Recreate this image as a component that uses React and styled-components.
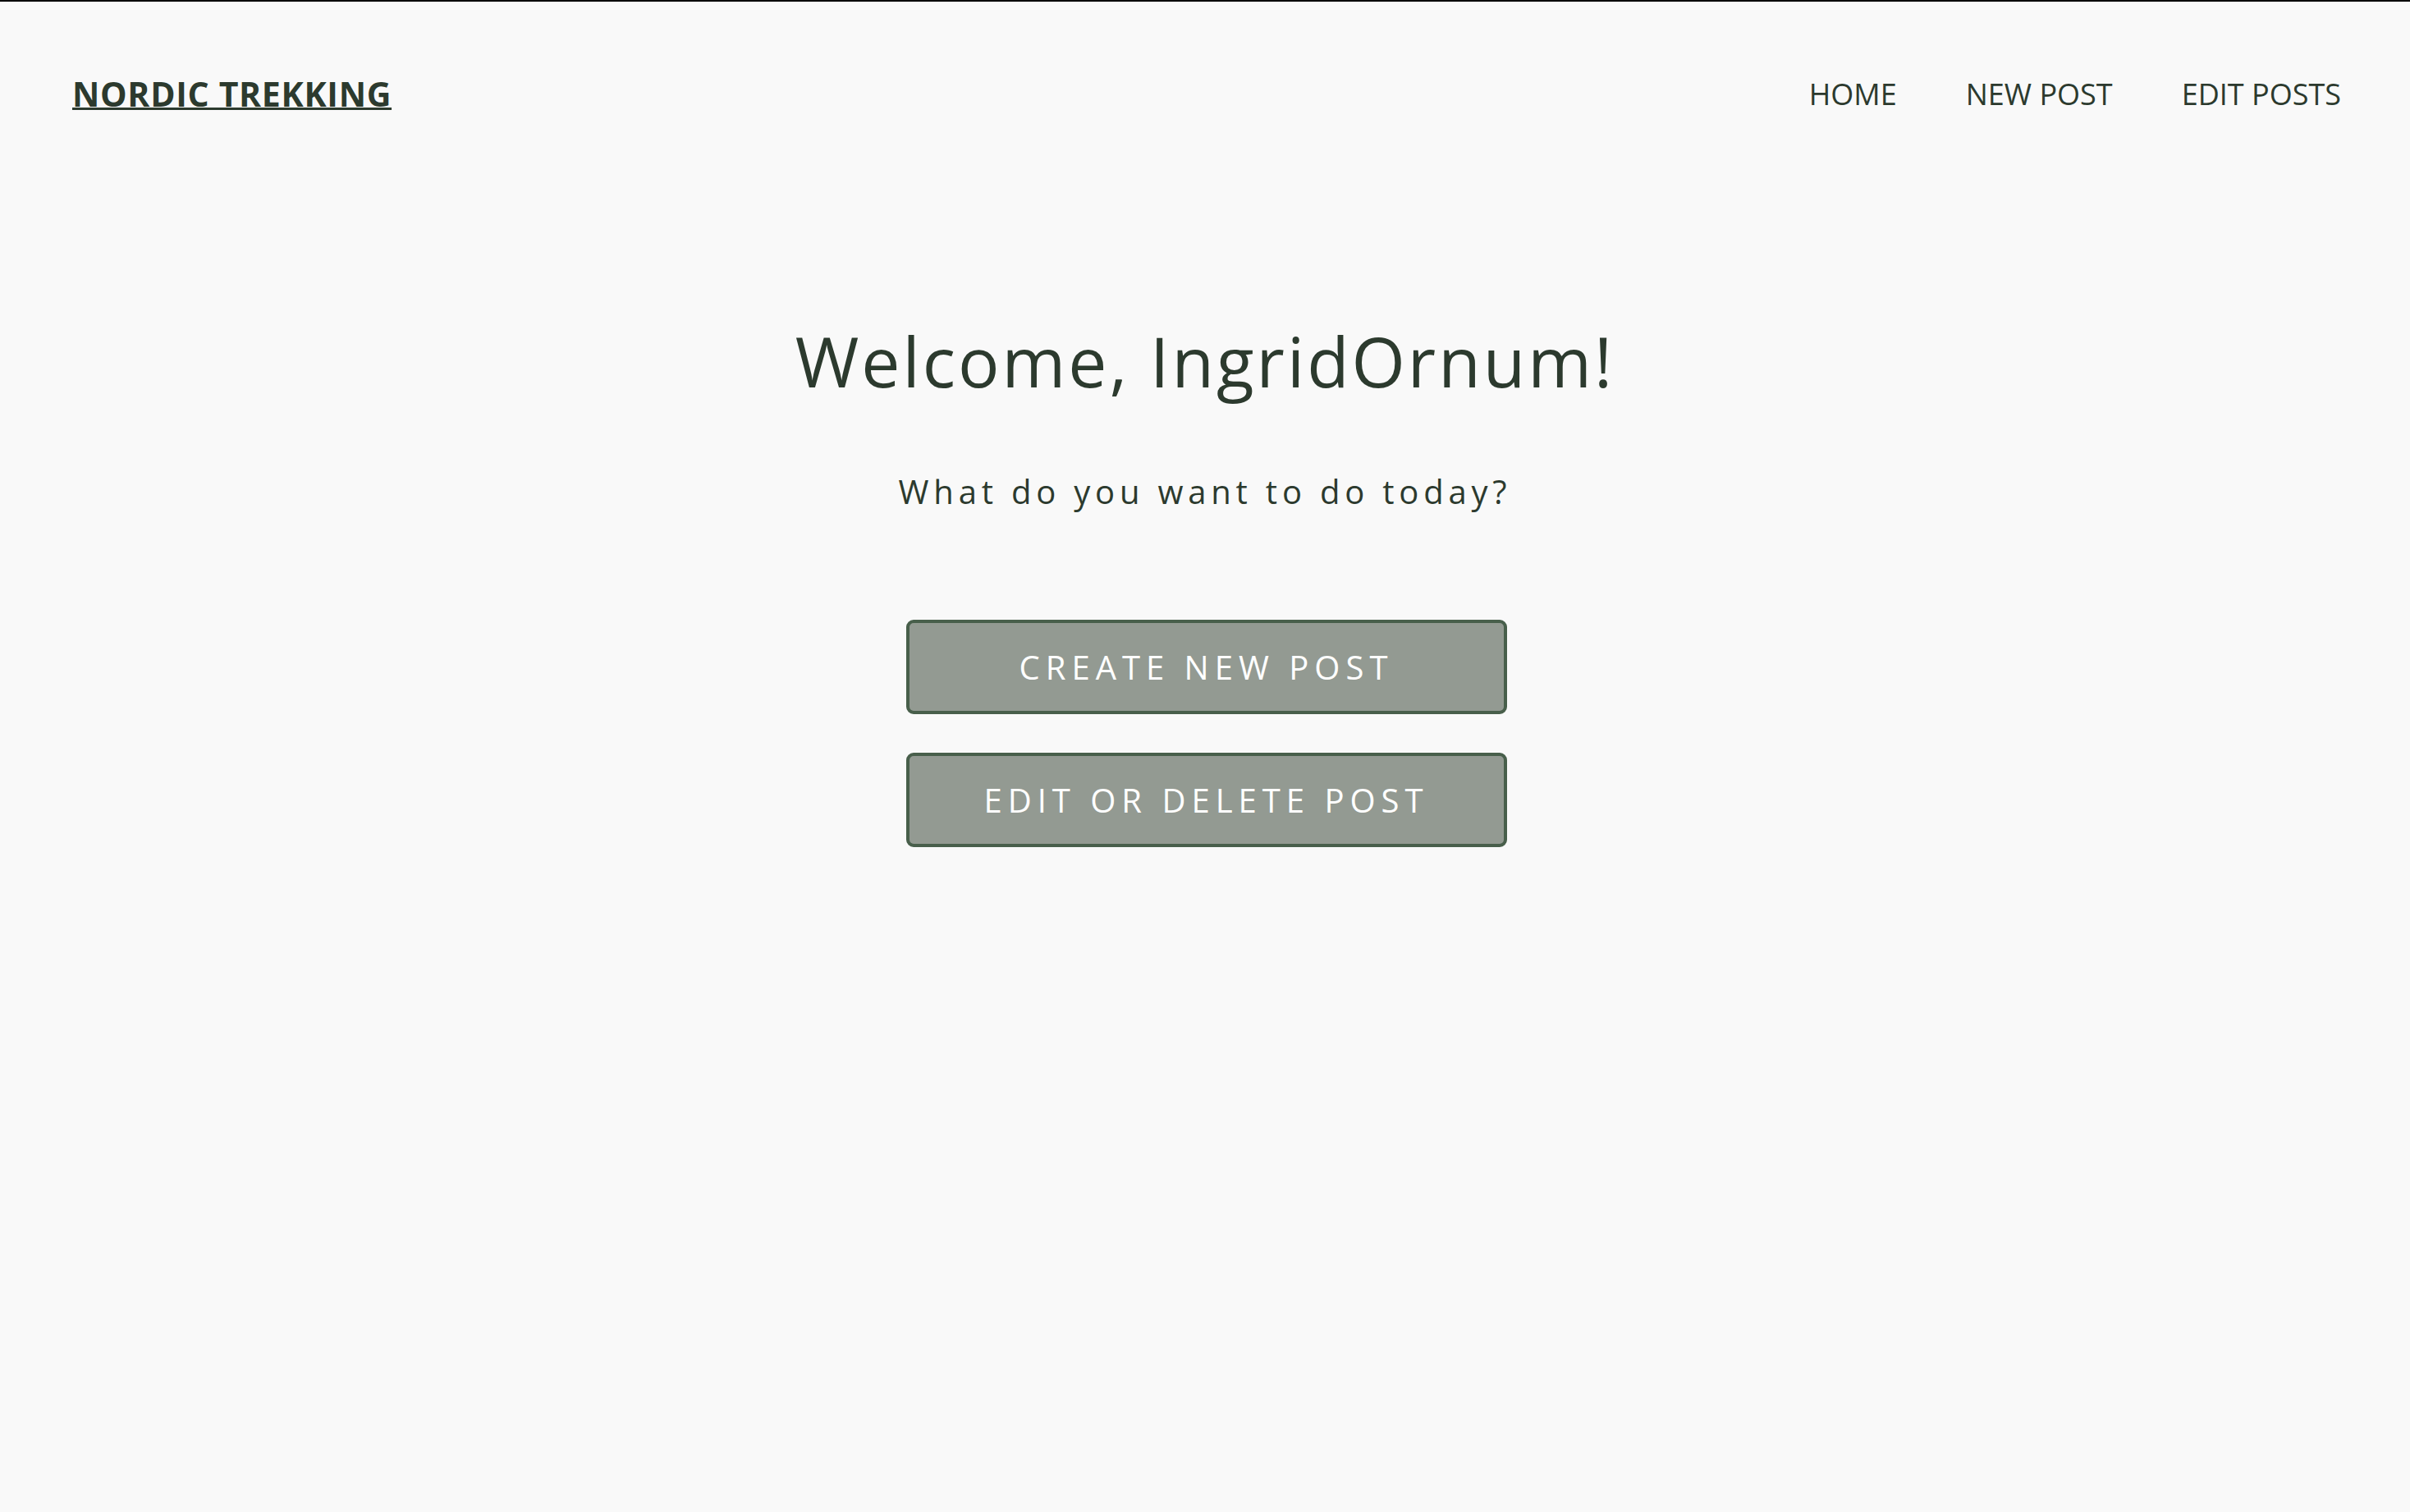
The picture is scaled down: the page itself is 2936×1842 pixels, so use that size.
import styled, { createGlobalStyle } from "styled-components"

const GlobalStyle = createGlobalStyle`
    html, body {
        margin: 0;
        padding: 0;
        background: #f9f9f9;
    }
    body {
        border-top: 2px solid #000;
        min-height: 1840px;
        font-family: "Open Sans", "Liberation Sans", sans-serif;
        color: #2c3a2e;
    }
`

const links = ["HOME", "NEW POST", "EDIT POSTS"]

function App() {
    return (
        <>
            <GlobalStyle />
            <Page>
                <Header>
                    <Logo href="#">NORDIC TREKKING</Logo>
                    <Nav>
                        {links.map((l) => (
                            <NavLink key={l} href="#">{l}</NavLink>
                        ))}
                    </Nav>
                </Header>
                <Main>
                    <Title>Welcome, IngridOrnum!</Title>
                    <Subtitle>What do you want to do today?</Subtitle>
                    <Actions>
                        <ActionButton>CREATE NEW POST</ActionButton>
                        <ActionButton>EDIT OR DELETE POST</ActionButton>
                    </Actions>
                </Main>
            </Page>
        </>
    )
}

const Page = styled.div`
    display: flex;
    flex-direction: column;
`

const Header = styled.header`
    display: flex;
    justify-content: space-between;
    align-items: center;
    padding: 82px 84px 0 88px;
    height: 60px;
`

const Logo = styled.a`
    font-family: "Open Sans", sans-serif;
    font-weight: 700;
    font-size: 41px;
    letter-spacing: 0.7px;
    color: #2c3a2e;
    text-decoration: underline;
    text-decoration-thickness: 3px;
    text-underline-offset: 1px;
`

const Nav = styled.nav`
    display: flex;
    gap: 84px;
`

const NavLink = styled.a`
    font-family: "Open Sans", sans-serif;
    font-size: 36px;
    color: #2c3a2e;
    text-decoration: none;
`

const Main = styled.main`
    display: flex;
    flex-direction: column;
    align-items: center;
    padding-top: 246px;
`

const Title = styled.h1`
    margin: 0;
    font-family: "Open Sans", sans-serif;
    font-weight: 400;
    font-size: 84px;
    letter-spacing: 3px;
    color: #2c3a2e;
    line-height: 1.2;
`

const Subtitle = styled.p`
    margin: 80px 0 0;
    font-family: "Open Sans", sans-serif;
    font-size: 40px;
    letter-spacing: 5.8px;
    color: #2c3a2e;
`

const Actions = styled.div`
    display: flex;
    flex-direction: column;
    gap: 47px;
    margin-top: 129px;
`

const ActionButton = styled.button`
    width: 732px;
    height: 115px;
    margin-left: 3px;
    background: #939a92;
    border: 4px solid #485f4b;
    border-radius: 9px;
    color: #fff;
    font-family: "Open Sans", sans-serif;
    font-size: 40px;
    letter-spacing: 7px;
    cursor: pointer;
`

export default App
